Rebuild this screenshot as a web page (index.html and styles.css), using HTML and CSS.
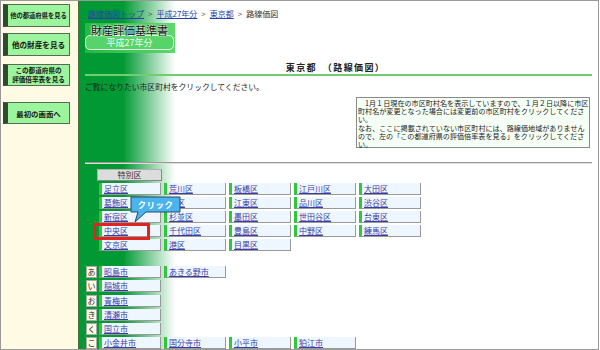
FILE: index.html
```html
<!DOCTYPE html>
<html lang="ja">
<head>
<meta charset="utf-8">
<title>路線価図</title>
<link rel="stylesheet" href="styles.css">
</head>
<body>
<div class="frame">
  <aside class="side">
    <a class="btn b1">他の都道府県を見る</a>
    <a class="btn b2">他の財産を見る</a>
    <a class="btn b3">この都道府県の<br>評価倍率表を見る</a>
    <a class="btn b4">最初の画面へ</a>
  </aside>
  <main class="main">
    <div class="crumb"><a>路線価図トップ</a><i class="gt">&gt;</i><a>平成27年分</a><i class="gt">&gt;</i><a>東京都</a><i class="gt">&gt;</i><span>路線価図</span></div>
    <div class="title">
      <div class="title-main">財産評価基準書</div>
      <div class="title-sub">平成27年分</div>
    </div>
    <h1 class="heading">東京都　（路線価図）</h1>
    <p class="lead">ご覧になりたい市区町村をクリックしてください。</p>
    <div class="note">　1月１日現在の市区町村名を表示していますので、１月２日以降に市区<br>町村名が変更となった場合には変更前の市区町村をクリックしてくださ<br>い。<br>なお、ここに掲載されていない市区町村には、路線価地域がありません<br>ので、左の「この都道府県の評価倍率表を見る」をクリックしてくださ<br>い。</div>
    <div class="sep"></div>
    <section class="wards">
      <div class="ward-head">特別区</div>
      <div class="grid">
        <a class="cell">足立区</a><a class="cell">荒川区</a><a class="cell">板橋区</a><a class="cell">江戸川区</a><a class="cell">大田区</a>
        <a class="cell">葛飾区</a><a class="cell">北区</a><a class="cell">江東区</a><a class="cell">品川区</a><a class="cell">渋谷区</a>
        <a class="cell">新宿区</a><a class="cell">杉並区</a><a class="cell">墨田区</a><a class="cell">世田谷区</a><a class="cell">台東区</a>
        <a class="cell">中央区</a><a class="cell">千代田区</a><a class="cell">豊島区</a><a class="cell">中野区</a><a class="cell">練馬区</a>
        <a class="cell">文京区</a><a class="cell">港区</a><a class="cell">目黒区</a>
      </div>
      <div class="redbox"></div>
      <div class="callout">
        <svg class="callout-shape" width="52" height="28" viewBox="0 0 52 28"><path d="M1 1 H50 V16 H16 L5 26 L8 16 H1 Z" fill="#4bb4ee" stroke="#2a4a66" stroke-width="1"/></svg>
        <span class="callout-text">クリック</span>
      </div>
    </section>
    <section class="cities">
      <div class="crow"><span class="kana">あ</span><a class="cell">昭島市</a><a class="cell">あきる野市</a></div>
      <div class="crow"><span class="kana">い</span><a class="cell">稲城市</a></div>
      <div class="crow"><span class="kana">お</span><a class="cell">青梅市</a></div>
      <div class="crow"><span class="kana">き</span><a class="cell">清瀬市</a></div>
      <div class="crow"><span class="kana">く</span><a class="cell">国立市</a></div>
      <div class="crow"><span class="kana">こ</span><a class="cell">小金井市</a><a class="cell">国分寺市</a><a class="cell">小平市</a><a class="cell">狛江市</a></div>
    </section>
  </main>
</div>
</body>
</html>
```
FILE: styles.css
```css
* { box-sizing: border-box; }
html, body { margin: 0; padding: 0; background: #fff; }
body { font-family: "Noto Sans CJK JP", "DejaVu Sans", sans-serif; color: #222; }

.frame {
  width: 599px;
  height: 350px;
  border: 1px solid #9a9a9a;
  display: flex;
  overflow: hidden;
  background: #fff;
}

.side {
  width: 78px;
  flex: none;
  background: #fffae4;
  border-right: 1px solid #4d6b3a;
  display: flex;
  flex-direction: column;
  align-items: flex-start;
  padding: 3px 0 0 2px;
}
.btn {
  display: flex;
  align-items: center;
  justify-content: center;
  text-align: center;
  width: 67px;
  height: 23px;
  background: #9cf59c;
  border: 1px solid #5a6a5a;
  border-left: 5px solid #2f4a2f;
  font-size: 7px;
  line-height: 9px;
  font-weight: bold;
  color: #1a1a1a;
  white-space: nowrap;
}
.b1 { font-size: 6.3px; }
.b2 { margin-top: 6px; font-size: 7.6px; }
.b3 { margin-top: 8px; height: 22px; font-size: 6.6px; line-height: 9px; }
.b4 { margin-top: 16px; height: 22px; font-size: 7.4px; }

.main {
  flex: 1;
  min-width: 0;
  background: linear-gradient(to right, #009933 0, #009933 44px, #ffffff 96px);
  padding-top: 8px;
}

.crumb {
  margin-left: 9px;
  font-size: 8px;
  line-height: 10px;
  height: 10px;
  color: #333;
  white-space: nowrap;
}
.crumb a { color: #2a3fb0; text-decoration: underline; }
.crumb span { color: #333; }
.crumb .gt { font-style: normal; color: #555; margin: 0 4px; }

.title {
  margin: 4px 0 0 6px;
  width: 90px;
  height: 30px;
  background: linear-gradient(to right, #22b844, #5fd86a);
  padding-top: 1px;
}
.title-main {
  font-size: 11px;
  line-height: 13px;
  color: #111;
  padding-left: 6px;
  position: relative;
  z-index: 1;
  text-shadow: 0 0 2px #fff, 0 0 2px #fff;
}
.title-sub {
  margin: -2px 1px 0 0;
  height: 15px;
  border: 1px solid #e6ffe6;
  border-radius: 5px;
  background: #56d46a;
  font-size: 9px;
  line-height: 13px;
  color: #f4fff4;
  text-align: center;
}

.heading {
  margin: 9px 6px 0 6px;
  height: 14px;
  border-bottom: 2px solid #6fcf6f;
  font-size: 9px;
  line-height: 11px;
  font-weight: bold;
  letter-spacing: 1.4px;
  text-align: center;
  color: #222;
  padding-right: 6px;
}

.lead {
  margin: 6px 0 0 6px;
  font-size: 7.8px;
  line-height: 10px;
  color: #222;
  white-space: nowrap;
}

.note {
  margin: 5px 8px 0 auto;
  width: 234px;
  height: 51px;
  border: 1px solid #8a8a8a;
  background: #f6fff6;
  padding: 1px 0 0 1px;
  font-size: 7.1px;
  line-height: 8.2px;
  white-space: nowrap;
  color: #222;
}

.sep {
  margin: 14px 6px 0 6px;
  height: 2px;
  border-top: 1px solid #999;
  border-bottom: 1px solid #ddd;
}

.wards {
  position: relative;
  margin-top: 5px;
}
.ward-head {
  margin-left: 18px;
  width: 65px;
  height: 12px;
  background: #dcdcdc;
  border: 1px solid #b0b0b0;
  border-right-color: #888;
  border-bottom-color: #888;
  font-size: 8px;
  line-height: 10px;
  text-align: center;
  color: #333;
}
.grid {
  margin: 2px 0 0 20px;
  display: grid;
  grid-template-columns: repeat(5, 62px);
  column-gap: 3px;
  row-gap: 2px;
}
.cell {
  display: block;
  width: 62px;
  height: 12px;
  background: #eef6ff;
  border-left: 3px solid #2fc83a;
  border-right: 1px solid #999;
  border-bottom: 1px solid #999;
  font-size: 8px;
  line-height: 11px;
  padding-left: 2px;
  color: #3a3ca8;
  text-decoration: underline;
  white-space: nowrap;
}

.redbox {
  position: absolute;
  left: 14px;
  top: 54px;
  width: 57px;
  height: 17px;
  border: 3px solid #e32222;
}
.callout {
  position: absolute;
  left: 51px;
  top: 27px;
  width: 52px;
  height: 28px;
}
.callout-shape { display: block; }
.callout-text {
  position: absolute;
  left: 1px;
  top: 1px;
  width: 49px;
  height: 15px;
  font-size: 8.5px;
  line-height: 15px;
  font-weight: bold;
  color: #fff;
  text-align: center;
  letter-spacing: 0.5px;
}

.cities {
  margin: 15px 0 0 7px;
  display: flex;
  flex-direction: column;
  gap: 2.3px;
}
.crow {
  display: flex;
  height: 12px;
  gap: 3px;
}
.crow .kana {
  width: 11px;
  height: 12px;
  margin-right: -1px;
  background: #fffae4;
  border: 1px solid #aaa;
  font-size: 8px;
  line-height: 10px;
  text-align: center;
  color: #333;
}
```
